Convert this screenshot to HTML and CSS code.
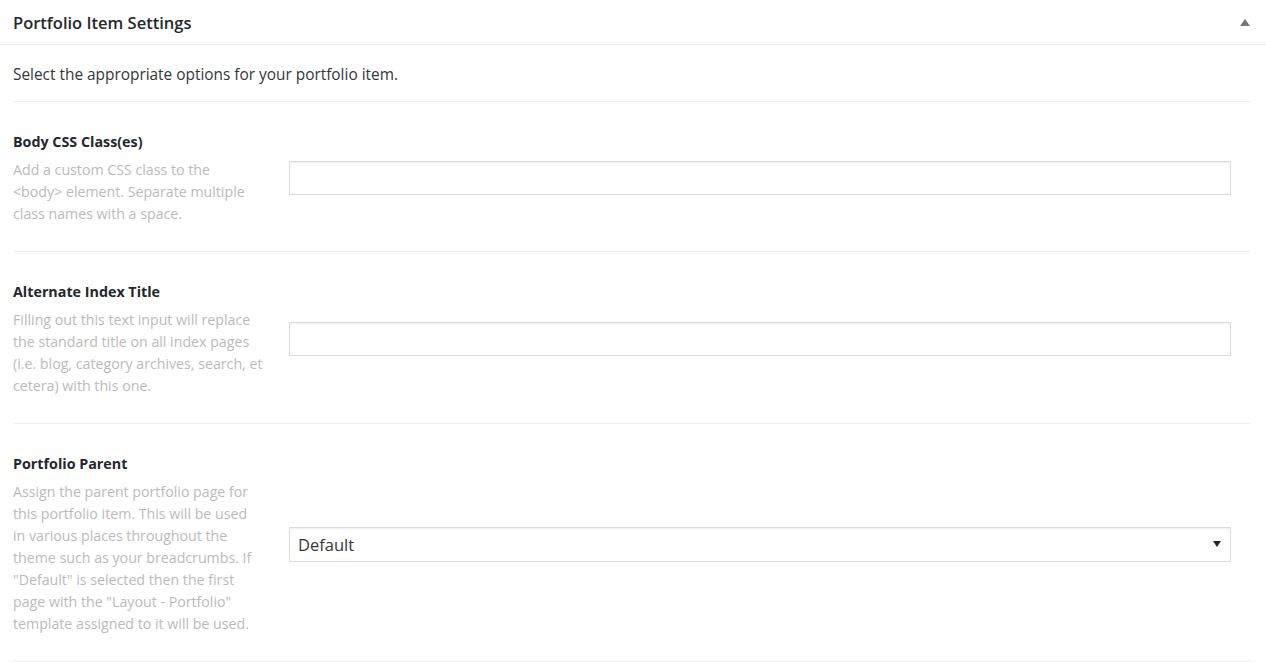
FILE: index.html
```html
<!DOCTYPE html>
<html lang="en">
<head>
    <meta charset="UTF-8">
    <title>Portfolio Item Settings</title>
    <link rel="stylesheet" href="styles.css">
</head>
<body>
    <div class="metabox">
        <div class="metabox-header">
            <h2>Portfolio Item Settings</h2>
            <span class="toggle"></span>
        </div>
        <div class="metabox-inside">
            <p class="intro">Select the appropriate options for your portfolio item.</p>

            <div class="option-row">
                <div class="option-info">
                    <h4>Body CSS Class(es)</h4>
                    <p>Add a custom CSS class to the &lt;body&gt; element. Separate multiple class names with a space.</p>
                </div>
                <div class="option-field">
                    <input type="text" class="text-input">
                </div>
            </div>

            <div class="option-row">
                <div class="option-info">
                    <h4>Alternate Index Title</h4>
                    <p>Filling out this text input will replace the standard title on all index pages (i.e. blog, category archives, search, et cetera) with this one.</p>
                </div>
                <div class="option-field">
                    <input type="text" class="text-input">
                </div>
            </div>

            <div class="option-row">
                <div class="option-info">
                    <h4>Portfolio Parent</h4>
                    <p>Assign the parent portfolio page for this portfolio item. This will be used in various places throughout the theme such as your breadcrumbs. If "Default" is selected then the first page with the "Layout - Portfolio" template assigned to it will be used.</p>
                </div>
                <div class="option-field">
                    <div class="select-box">
                        <span>Default</span>
                        <span class="caret"></span>
                    </div>
                </div>
            </div>
        </div>
    </div>
</body>
</html>
```

FILE: styles.css
```css
body {
    margin: 0;
    background-color: #fff;
    font-family: "Open Sans", "Noto Sans", sans-serif;
    color: #444;
}
.metabox-header {
    display: flex;
    align-items: center;
    justify-content: space-between;
    height: 44px;
    padding: 0 13px;
    border-bottom: 1px solid #eee;
}
.metabox-header h2 {
    margin: 0;
    font-size: 16.5px;
    font-weight: 600;
    color: #23282d;
}
.toggle {
    width: 0;
    height: 0;
    margin-right: 3px;
    border-left: 5px solid transparent;
    border-right: 5px solid transparent;
    border-bottom: 7px solid #72777c;
}
.metabox-inside {
    padding: 0 15px 0 13px;
}
.intro {
    margin: 0;
    padding: 19px 0 15px;
    font-size: 15.4px;
    line-height: 22px;
    color: #32373c;
    border-bottom: 1px solid #eee;
}
.option-row {
    display: grid;
    grid-template-columns: 249.5px 1fr;
    column-gap: 26.5px;
    align-items: center;
    padding: 29px 0 26px;
    border-bottom: 1px solid #eee;
}
.option-info h4 {
    margin: 0 0 6px;
    font-size: 14.3px;
    line-height: 22px;
    font-weight: 700;
    color: #23282d;
}
.option-info p {
    margin: 0;
    font-size: 14.2px;
    line-height: 22px;
    color: #bbb;
}
.option-field {
    padding-right: 20px;
}
.text-input {
    display: block;
    width: 100%;
    height: 34px;
    box-sizing: border-box;
    border: 1px solid #ddd;
    box-shadow: inset 0 1px 2px rgba(0, 0, 0, 0.07);
    background-color: #fff;
}
.select-box {
    display: flex;
    align-items: center;
    justify-content: space-between;
    height: 35px;
    box-sizing: border-box;
    padding: 0 9px 0 8px;
    border: 1px solid #ddd;
    box-shadow: inset 0 1px 2px rgba(0, 0, 0, 0.07);
    font-size: 16.5px;
    color: #32373c;
}
.caret {
    width: 0;
    height: 0;
    border-left: 4px solid transparent;
    border-right: 4px solid transparent;
    border-top: 6px solid #23282d;
}
```
